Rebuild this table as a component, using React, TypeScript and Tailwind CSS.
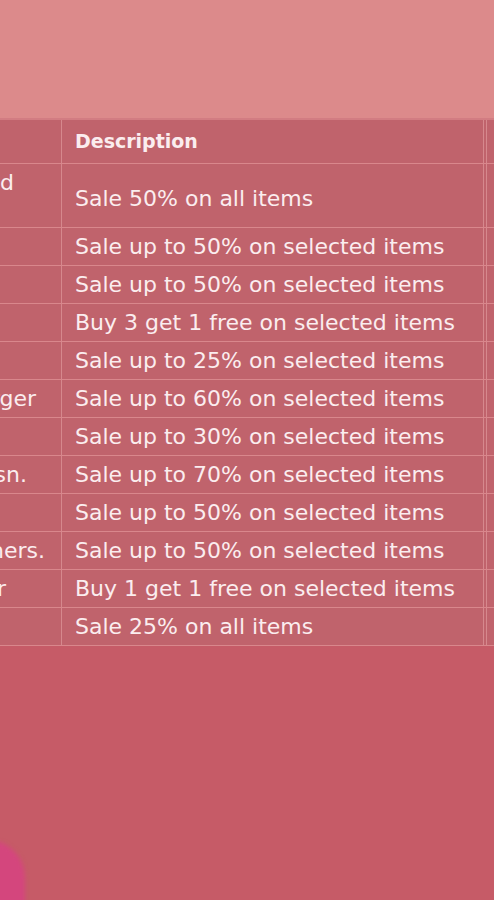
const rows = [
  { left: "Storewide Weekend", desc: "Sale 50% on all items", tall: true, pad: "pr-[47px]" },
  { left: "", desc: "Sale up to 50% on selected items" },
  { left: "", desc: "Sale up to 50% on selected items" },
  { left: "", desc: "Buy 3 get 1 free on selected items" },
  { left: "", desc: "Sale up to 25% on selected items" },
  { left: "Burger", desc: "Sale up to 60% on selected items", pad: "pr-[25px]" },
  { left: "", desc: "Sale up to 30% on selected items" },
  { left: "Sdn Bhd Fsn.", desc: "Sale up to 70% on selected items", pad: "pr-[34px]" },
  { left: "", desc: "Sale up to 50% on selected items" },
  { left: "Partners.", desc: "Sale up to 50% on selected items", pad: "pr-[16px]" },
  { left: "Baker", desc: "Buy 1 get 1 free on selected items", pad: "pr-[55px]" },
  { left: "", desc: "Sale 25% on all items" },
];

export default function App() {
  return (
    <div
      className="relative min-h-[900px] overflow-hidden bg-[#c65b67] text-[#fbedef]"
      style={{ fontFamily: '"DejaVu Sans", sans-serif' }}
    >
      {/* top band */}
      <div className="h-[118px] bg-[#dc8a8b]" />

      {/* table */}
      <div className="ml-[-200px] w-[820px] border-t-2 border-[#d27c82] bg-[#c0636c]">
        <div className="grid h-[44px] grid-cols-[262px_425px_133px] border-b border-[#d9878c]">
          <div className="border-r border-[#d6888d]" />
          <div className="flex items-center border-r-4 border-double border-[#d6888d] pl-[13px] text-[19px] font-bold">
            Description
          </div>
          <div />
        </div>
        {rows.map((r, i) => (
          <div
            key={i}
            className={`grid grid-cols-[262px_425px_133px] border-b border-[#d9878c] ${
              r.tall ? "h-[64px]" : "h-[38px]"
            }`}
          >
            <div
              className={`flex justify-end overflow-hidden whitespace-nowrap border-r border-[#d6888d] text-[22px] ${
                r.pad ?? ""
              } ${r.tall ? "items-start pt-[2px]" : "items-center"}`}
            >
              {r.left}
            </div>
            <div
              className={`flex items-center whitespace-nowrap border-r-4 border-double border-[#d6888d] pl-[13px] text-[22px] ${
                r.tall ? "pt-[6px]" : ""
              }`}
            >
              {r.desc}
            </div>
            <div />
          </div>
        ))}
      </div>

      {/* blob bottom-left */}
      <div className="absolute bottom-[-60px] left-[-50px] h-[120px] w-[75px] rounded-full bg-[#d4467d] blur-[2px]" />
    </div>
  );
}
